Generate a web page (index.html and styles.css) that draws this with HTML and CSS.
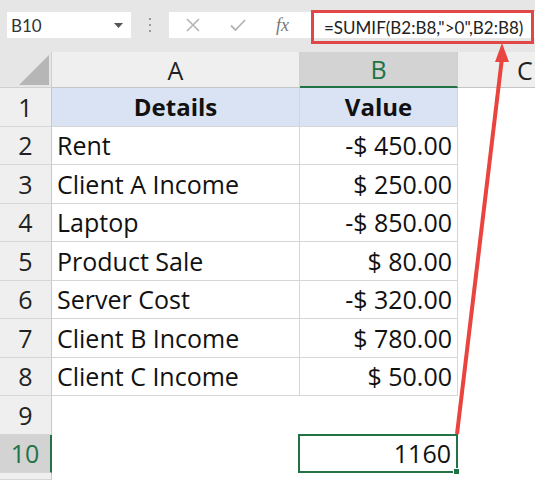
FILE: index.html
```html
<!DOCTYPE html>
<html lang="en">

<head>
    <meta charset="UTF-8">
    <meta name="viewport" content="width=device-width, initial-scale=1.0">
    <title>SUMIF</title>
    <link rel="stylesheet" href="styles.css">
</head>

<body>
    <!-- formula bar -->
    <div class="toolbar">
        <div class="name-box">
            <span>B10</span>
            <svg width="9" height="5" viewBox="0 0 9 5"><path d="M0 0h9L4.5 5z" fill="#555"/></svg>
        </div>
        <div class="grip">
            <svg width="4" height="16" viewBox="0 0 4 16"><g fill="#9a9a9a"><rect x="1" y="1" width="2" height="2"/><rect x="1" y="7" width="2" height="2"/><rect x="1" y="13" width="2" height="2"/></g></svg>
        </div>
        <div class="formula-bar">
            <span class="fx-btn">
                <svg width="14" height="14" viewBox="0 0 14 14"><path d="M1 1L13 13M13 1L1 13" stroke="#b4b4b4" stroke-width="1.6" fill="none"/></svg>
            </span>
            <span class="fx-btn">
                <svg width="16" height="13" viewBox="0 0 16 13"><path d="M1 6.5L5.5 11L15 1" stroke="#b4b4b4" stroke-width="1.8" fill="none"/></svg>
            </span>
            <span class="fx-btn fx">fx</span>
            <span class="formula">=SUMIF(B2:B8,"&gt;0",B2:B8)</span>
        </div>
    </div>

    <!-- sheet -->
    <div class="sheet">
        <div class="corner"></div>
        <div class="col-head">A</div>
        <div class="col-head active">B</div>
        <div class="col-head col-c">C</div>

        <div class="row-head">1</div>
        <div class="cell title">Details</div>
        <div class="cell title">Value</div>
        <div class="blank"></div>

        <div class="row-head">2</div>
        <div class="cell">Rent</div>
        <div class="cell num">-$ 450.00</div>
        <div class="blank"></div>

        <div class="row-head">3</div>
        <div class="cell">Client A Income</div>
        <div class="cell num">$ 250.00</div>
        <div class="blank"></div>

        <div class="row-head">4</div>
        <div class="cell">Laptop</div>
        <div class="cell num">-$ 850.00</div>
        <div class="blank"></div>

        <div class="row-head">5</div>
        <div class="cell">Product Sale</div>
        <div class="cell num">$ 80.00</div>
        <div class="blank"></div>

        <div class="row-head">6</div>
        <div class="cell">Server Cost</div>
        <div class="cell num">-$ 320.00</div>
        <div class="blank"></div>

        <div class="row-head">7</div>
        <div class="cell">Client B Income</div>
        <div class="cell num">$ 780.00</div>
        <div class="blank"></div>

        <div class="row-head">8</div>
        <div class="cell">Client C Income</div>
        <div class="cell num">$ 50.00</div>
        <div class="blank"></div>

        <div class="row-head">9</div>
        <div class="blank"></div>
        <div class="blank"></div>
        <div class="blank"></div>

        <div class="row-head active">10</div>
        <div class="blank"></div>
        <div class="blank selected">1160</div>
        <div class="blank"></div>

        <div class="row-head"></div>
        <div class="blank"></div>
        <div class="blank"></div>
        <div class="blank"></div>
    </div>

    <!-- annotation arrow -->
    <svg class="arrow" width="535" height="480" viewBox="0 0 535 480">
        <line x1="457" y1="434" x2="502" y2="58" stroke="#e9443f" stroke-width="4"/>
        <polygon points="502,43 495,62 509,62" fill="#e9443f"/>
    </svg>
</body>

</html>
```

FILE: styles.css
```css
body {
    margin: 0;
    width: 535px;
    height: 480px;
    overflow: hidden;
    position: relative;
    background: #fff;
    font-family: "Open Sans", "Noto Sans", sans-serif;
    color: #111;
}

/* formula bar */
.toolbar {
    height: 52px;
    box-sizing: border-box;
    padding-top: 12px;
    background: #e6e6e6;
    display: flex;
    align-items: flex-start;
}

.name-box {
    margin-left: 7px;
    width: 124px;
    height: 26px;
    box-sizing: border-box;
    padding: 0 8px 0 4px;
    background: #fff;
    display: flex;
    align-items: center;
    justify-content: space-between;
    font-family: Lato, sans-serif;
    font-size: 17px;
    color: #333;
}

.grip {
    width: 38px;
    height: 26px;
    display: flex;
    align-items: center;
    justify-content: center;
}

.formula-bar {
    flex: 1;
    height: 26px;
    background: #fff;
    display: flex;
    align-items: center;
}

.fx-btn {
    width: 45px;
    display: flex;
    justify-content: center;
    color: #777;
}

.fx-btn:first-child {
    margin-left: 1px;
}

.fx {
    font-family: "Liberation Serif", serif;
    font-style: italic;
    font-size: 18px;
}

.formula {
    margin-left: 6px;
    height: 34px;
    box-sizing: border-box;
    border: 3px solid #e04848;
    padding: 0 8px 0 10px;
    display: flex;
    align-items: center;
    font-family: Lato, sans-serif;
    font-size: 17px;
    color: #222;
    align-self: flex-start;
    margin-top: -2px;
}

/* grid */
.sheet {
    display: grid;
    grid-template-columns: 52px 248px 158px 1fr;
    grid-template-rows: 36px repeat(10, 38.5px) 7px;
    overflow: hidden;
    font-size: 25px;
}

.corner {
    background: #e6e6e6;
    border-right: 1px solid #cfcfcf;
    border-bottom: 1px solid #cfcfcf;
    position: relative;
}

.corner::after {
    content: "";
    position: absolute;
    right: 2px;
    bottom: 2px;
    border-style: solid;
    border-width: 0 0 30px 30px;
    border-color: transparent transparent #b6b6b6 transparent;
}

.col-head {
    background: #efefef;
    border-right: 1px solid #d0d0d0;
    border-bottom: 1px solid #c4c4c4;
    display: flex;
    align-items: center;
    justify-content: center;
    font-size: 25px;
    color: #222;
}

.col-head.active {
    background: #d3d3d3;
    color: #217346;
    border-bottom: 2px solid #217346;
}

.col-head.col-c {
    border-right: none;
    justify-content: flex-start;
    padding-left: 59px;
}

.row-head {
    background: #efefef;
    border-right: 1px solid #c8c8c8;
    border-bottom: 1px solid #d6d6d6;
    display: flex;
    align-items: center;
    justify-content: center;
    color: #222;
}

.row-head.active {
    background: #d3d3d3;
    color: #217346;
    border-right: 2px solid #217346;
}

.cell {
    border-right: 1px solid #d6d6d6;
    border-bottom: 1px solid #d6d6d6;
    display: flex;
    align-items: center;
    padding: 0 5px;
    white-space: nowrap;
}

.cell.title {
    background: #dae3f3;
    font-weight: bold;
    font-size: 24px;
    justify-content: center;
}

.cell.num {
    justify-content: flex-end;
}

.blank {
    display: flex;
    align-items: center;
    justify-content: flex-end;
    padding: 0 5px;
}

.blank.selected {
    border: 2px solid #217346;
    margin: -1px 0 0 -2px;
    position: relative;
}

.blank.selected::after {
    content: "";
    position: absolute;
    right: -4px;
    bottom: -4px;
    width: 5px;
    height: 5px;
    background: #217346;
    border: 1px solid #fff;
}

/* annotation */
.arrow {
    position: absolute;
    left: 0;
    top: 0;
}
```
